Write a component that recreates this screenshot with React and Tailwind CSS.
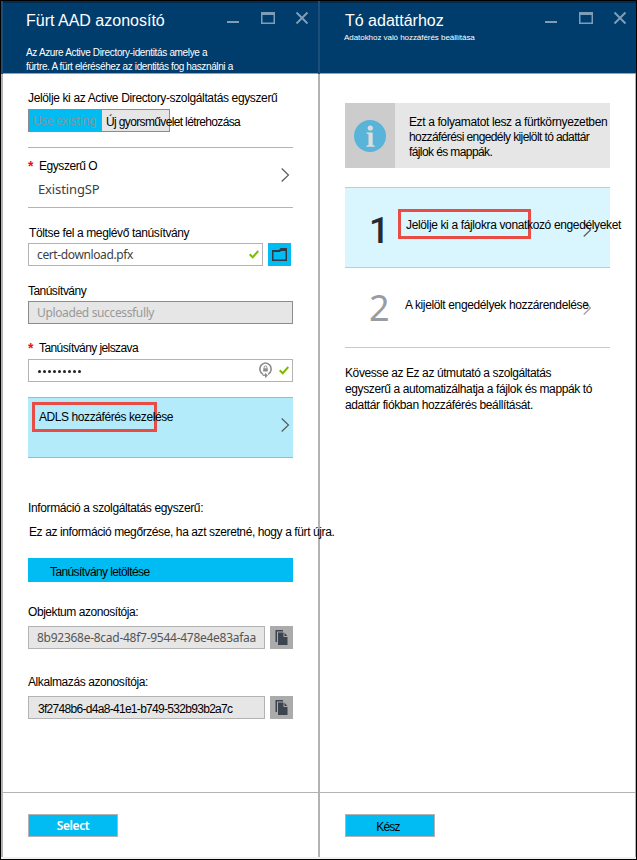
function WindowButtons() {
  return (
    <svg className="mt-[-1px] h-[16px] w-[84px] shrink-0" viewBox="0 0 84 16" fill="none" stroke="#7f9db6">
      <path d="M0 12H12" strokeWidth="2" />
      <path d="M34 3.5H48" strokeWidth="3" />
      <path d="M34.75 2V13.25H47.25V2" strokeWidth="1.5" />
      <path d="M69.5 2.5L80.5 13.5M80.5 2.5L69.5 13.5" strokeWidth="2" />
    </svg>
  );
}

function Header({ children }) {
  return (
    <header className="flex h-[73px] shrink-0 justify-between border-t-2 border-b border-t-[#032b4f] border-b-[#8ea3b5] bg-[#003c6c] pt-[8px] pr-[7px] pl-[23px] text-white">
      <div className="w-0 grow whitespace-nowrap">{children}</div>
      <WindowButtons />
    </header>
  );
}

function Chevron({ className = "" }) {
  return (
    <svg className={`h-[14px] w-[9px] shrink-0 ${className}`} viewBox="0 0 9 14" fill="none" stroke="currentColor" strokeWidth="1.1">
      <path d="M0.7 0.5L7.5 7L0.7 13.5" />
    </svg>
  );
}

function Check() {
  return (
    <svg className="h-[9px] w-[10px] shrink-0" viewBox="0 0 10 9" fill="none" stroke="#7fba00" strokeWidth="2">
      <path d="M0.7 4.2L3.7 7.2L9.3 1" />
    </svg>
  );
}

function KeyLock() {
  return (
    <svg className="h-[17px] w-[13px] shrink-0" viewBox="0 0 13 17" fill="none" stroke="#8c8c8c">
      <path d="M4 12.4A5.6 6 0 1 1 9 12.4" strokeWidth="1.6" />
      <path d="M3.6 13.2H7" strokeWidth="1.4" />
      <path d="M6 10.8L9 13.4L6 16.2Z" fill="#8c8c8c" stroke="none" />
      <path d="M5.2 6.5V5.2a1.3 1.3 0 0 1 2.6 0V6.5" strokeWidth="1" />
      <rect x="4.2" y="6.3" width="4.6" height="3.2" fill="#8c8c8c" stroke="none" />
    </svg>
  );
}

function CopyButton() {
  return (
    <button className="flex h-[23px] w-[23px] items-center justify-center bg-[#ababab]">
      <svg className="h-[15px] w-[13px]" viewBox="0 0 13 15">
        <path d="M0.5 0H8V1.5H2V12H0.5Z" fill="#3c444f" />
        <path d="M3 2.5H8.5V7H12.5V15H3Z" fill="#3c444f" />
        <path d="M9.5 2.7L12.4 6H9.5Z" fill="#3c444f" />
      </svg>
    </button>
  );
}

function Label({ children, className = "" }) {
  return <div className={`h-[16px] whitespace-nowrap text-[12px] leading-[16px] text-black ${className}`}>{children}</div>;
}

const noto = "font-['Noto_Sans',sans-serif]";

export default function App() {
  return (
    <div className="h-[860px] w-[637px] border border-black bg-white font-['Liberation_Sans',Arial,sans-serif] text-[12px] text-black">
      <div className="flex h-[856px]">
        <section className="flex w-[317px]">
          <div className="flex w-[2px] shrink-0 flex-col"><i className="h-[73px] bg-[#1d4e7a]" /><i className="grow bg-[#b3b3b3]" /></div>
          <div className="flex w-[315px] flex-col">
            <Header>
              <h1 className="mt-[-1px] text-[16px] leading-[22px]">Fürt AAD azonosító</h1>
              <p className="mt-[14px] text-[10px] leading-[14px]"><span className="tracking-[-0.34px]">Az Azure Active Directory-identitás amelye a</span><br /><span className="tracking-[-0.37px]">fürtre. A fürt eléréséhez az identitás fog használni a</span></p>
            </Header>
            <main className="grow pr-[25px] pl-[25px]">
              <Label className="mt-[16px] tracking-[-0.36px]">Jelölje ki az Active Directory-szolgáltatás egyszerű</Label>
              <div className="mt-[3px] flex h-[23px] w-[142px] border border-[#8c8c8c]">
                <div className={`w-[73px] shrink-0 border-r border-[#8c8c8c] bg-[#00bcf2] pl-[4px] whitespace-nowrap text-[#7f98a3] text-[12px] leading-[22px] tracking-[-0.42px] ${noto}`}>Use existing</div>
                <div className="w-[67px] bg-[#e6e6e6] pl-[4px] leading-[24px] tracking-[-0.64px] whitespace-nowrap">Új gyorsművelet létrehozása</div>
              </div>
              <div className="mt-[15px] flex h-[61px] items-center justify-between border-y border-[#b3b3b3] pr-[3px]">
                <div className="h-full">
                  <div className="mt-[10px] flex"><b className="w-[11px] text-[14px] leading-[16px] font-bold text-[#e81123]">*</b><Label className="tracking-[-0.45px]">Egyszerű O</Label></div>
                  <div className={`mt-[7px] ml-[10px] text-[13px] leading-[16px] tracking-[-0.12px] text-[#404040] ${noto}`}>ExistingSP</div>
                </div>
                <Chevron className="mt-[-5px] text-[#555]" />
              </div>
              <Label className="mt-[17px] ml-px tracking-[-0.37px]">Töltse fel a meglévő tanúsítvány</Label>
              <div className="mt-[2px] flex gap-[5px]">
                <div className="flex h-[23px] w-[235px] items-center justify-between border border-[#b3b3b3] pr-[3px] pl-[8px]">
                  <span className={`tracking-[-0.38px] text-[#404040] ${noto}`}>cert-download.pfx</span><Check />
                </div>
                <button className="flex h-[23px] w-[23px] items-center justify-center bg-[#00bcf2]">
                  <svg className="h-[13px] w-[15px]" viewBox="0 0 15 13"><path d="M0 2H7L8.5 0H15V13H0ZM1.5 4V11.5H13.5V3H9L8 4Z" fill="#2f3b46" fillRule="evenodd" /></svg>
                </button>
              </div>
              <Label className="mt-[17px] tracking-[-0.54px]">Tanúsítvány</Label>
              <div className={`mt-[2px] h-[23px] border border-[#8c8c8c] bg-[#e6e6e6] pl-[8px] leading-[22px] tracking-[-0.36px] text-[#999] ${noto}`}>Uploaded successfully</div>
              <div className="mt-[16px] flex"><b className="w-[11px] text-[14px] leading-[16px] font-bold text-[#e81123]">*</b><Label className="tracking-[-0.58px]">Tanúsítvány jelszava</Label></div>
              <div className="mt-[3px] flex h-[23px] items-center border border-[#b3b3b3] pr-[3px] pl-[9px]">
                <div className="flex grow gap-[2px] pt-[2px]">{[...Array(9)].map((_, i) => <i key={i} className="h-[3px] w-[3px] rounded-full bg-[#222]" />)}</div>
                <KeyLock /><span className="w-[7px]" /><Check />
              </div>
              <div className="mt-[15px] flex h-[61px] items-start border-y border-[#b3b3b3] bg-[#b3ebfb] pr-[3px] pl-[4px]">
                <div className="mt-[4px] h-[30px] w-[125px] border-3 border-[#e84c45] pl-[4px] leading-[25px] tracking-[-0.42px] whitespace-nowrap">ADLS hozzáférés kezelése</div>
                <Chevron className="mt-[20px] ml-auto text-[#555]" />
              </div>
              <Label className="mt-[42px] tracking-[-0.37px]">Információ a szolgáltatás egyszerű:</Label>
              <Label className="relative z-10 mt-[8px] ml-px tracking-[-0.4px]">Ez az információ megőrzése, ha azt szeretné, hogy a fürt újra.</Label>
              <button className="mt-[18px] block h-[24px] w-full bg-[#00bcf2] pl-[22px] text-left leading-[28px] tracking-[-0.6px]">Tanúsítvány letöltése</button>
              <Label className="mt-[22px] tracking-[-0.44px]">Objektum azonosítója:</Label>
              <div className="mt-[6px] flex gap-[5px]">
                <div className={`h-[23px] w-[237px] border border-[#b3b3b3] bg-[#e6e6e6] pl-[8px] leading-[22px] tracking-[-0.27px] text-[#555] ${noto}`}>8b92368e-8cad-48f7-9544-478e4e83afaa</div><CopyButton />
              </div>
              <Label className="mt-[25px] tracking-[-0.41px]">Alkalmazás azonosítója:</Label>
              <div className="mt-[6px] flex gap-[5px]">
                <div className="h-[23px] w-[237px] border border-[#b3b3b3] bg-[#e6e6e6] pl-[9px] leading-[24px] tracking-[-0.7px]">3f2748b6-d4a8-41e1-b749-532b93b2a7c</div><CopyButton />
              </div>
            </main>
            <footer className="h-[65px] shrink-0 border-t border-[#b3b3b3] px-[25px] pt-[21px]">
              <button className={`h-[23px] w-[90px] border border-[#b3b3b3] bg-[#00bcf2] text-center leading-[21px] font-semibold tracking-[-0.4px] text-white ${noto}`}>Select</button>
            </footer>
          </div>
        </section>
        <section className="flex w-[318px]">
          <div className="flex w-[2px] shrink-0 flex-col"><i className="h-[73px] bg-[#1d4e7a]" /><i className="grow bg-[#b3b3b3]" /></div>
          <div className="flex w-[316px] flex-col">
            <Header>
              <h1 className="mt-[-1px] pl-[2px] text-[16px] leading-[22px]">Tó adattárhoz</h1>
              <p className="ml-px text-[8px] leading-[11px] tracking-[-0.05px]">Adatokhoz való hozzáférés beállítása</p>
            </Header>
            <main className="grow border-r border-[#b3b3b3] pr-[25px] pl-[25px]">
              <div className="mt-[29px] flex h-[65px] bg-[#e6e6e6]">
                <div className="flex w-[50px] shrink-0 items-center justify-center bg-[#ccc]">
                  <svg className="h-[32px] w-[32px]" viewBox="0 0 32 32"><circle cx="16" cy="16" r="16" fill="#59b4d9" /><g fill="#ddd"><circle cx="16.3" cy="8" r="2.6" /><path d="M12.5 12.5H18.7V25L20.8 25.8V26.8H12.4V25.8L14.5 25V14.2L12.5 13.5Z" /></g></svg>
                </div>
                <div className="pt-[12px] pl-[14px] leading-[15px] whitespace-nowrap"><div className="tracking-[-0.38px]">Ezt a folyamatot lesz a fürtkörnyezetben</div><div className="tracking-[-0.6px]">hozzáférési engedély kijelölt tó adattár</div><div className="tracking-[-0.6px]">fájlok és mappák.</div></div>
              </div>
              <div className="mt-[19px] flex h-[81px] border-y border-[#c8c8c8] bg-[#d9f5fe] pl-[24px]">
                <div className="w-[29px] pt-[3px] font-['Roboto',sans-serif] text-[36px] leading-[80px] font-medium text-[#252b30]">1</div>
                <div className="relative z-10 mt-[21px] h-[30px] w-[133px] shrink-0 border-3 border-[#e84c45] pl-[5px] leading-[26px] tracking-[-0.36px] whitespace-nowrap">Jelölje ki a fájlokra vonatkozó engedélyeket</div>
                <Chevron className="mt-[35px] ml-[52px] text-[#555]" />
              </div>
              <div className="flex h-[80px] border-b border-[#c8c8c8] pl-[24px]">
                <div className={`w-[36px] text-[36px] leading-[80px] text-[#999ca0] ${noto}`}>2</div>
                <div className="relative z-10 w-[178px] pt-[29px] leading-[16px] tracking-[-0.37px] whitespace-nowrap">A kijelölt engedélyek hozzárendelése</div>
                <Chevron className="mt-[33px] text-[#999]" />
              </div>
              <div className="mt-[17px] leading-[16px] whitespace-nowrap"><div className="tracking-[-0.4px]">Kövesse az Ez az útmutató a szolgáltatás</div><div className="tracking-[-0.39px]">egyszerű a automatizálhatja a fájlok és mappák tó</div><div className="tracking-[-0.38px]">adattár fiókban hozzáférés beállítását.</div></div>
            </main>
            <footer className="h-[65px] shrink-0 border-t border-r border-[#b3b3b3] px-[25px] pt-[21px]">
              <button className="h-[23px] w-[90px] border border-[#b3b3b3] bg-[#00bcf2] pr-[4px] text-center leading-[24px] tracking-[-0.8px]">Kész</button>
            </footer>
          </div>
        </section>
      </div>
      <div className="h-[2px] bg-[#f0f0f0]" />
    </div>
  );
}
